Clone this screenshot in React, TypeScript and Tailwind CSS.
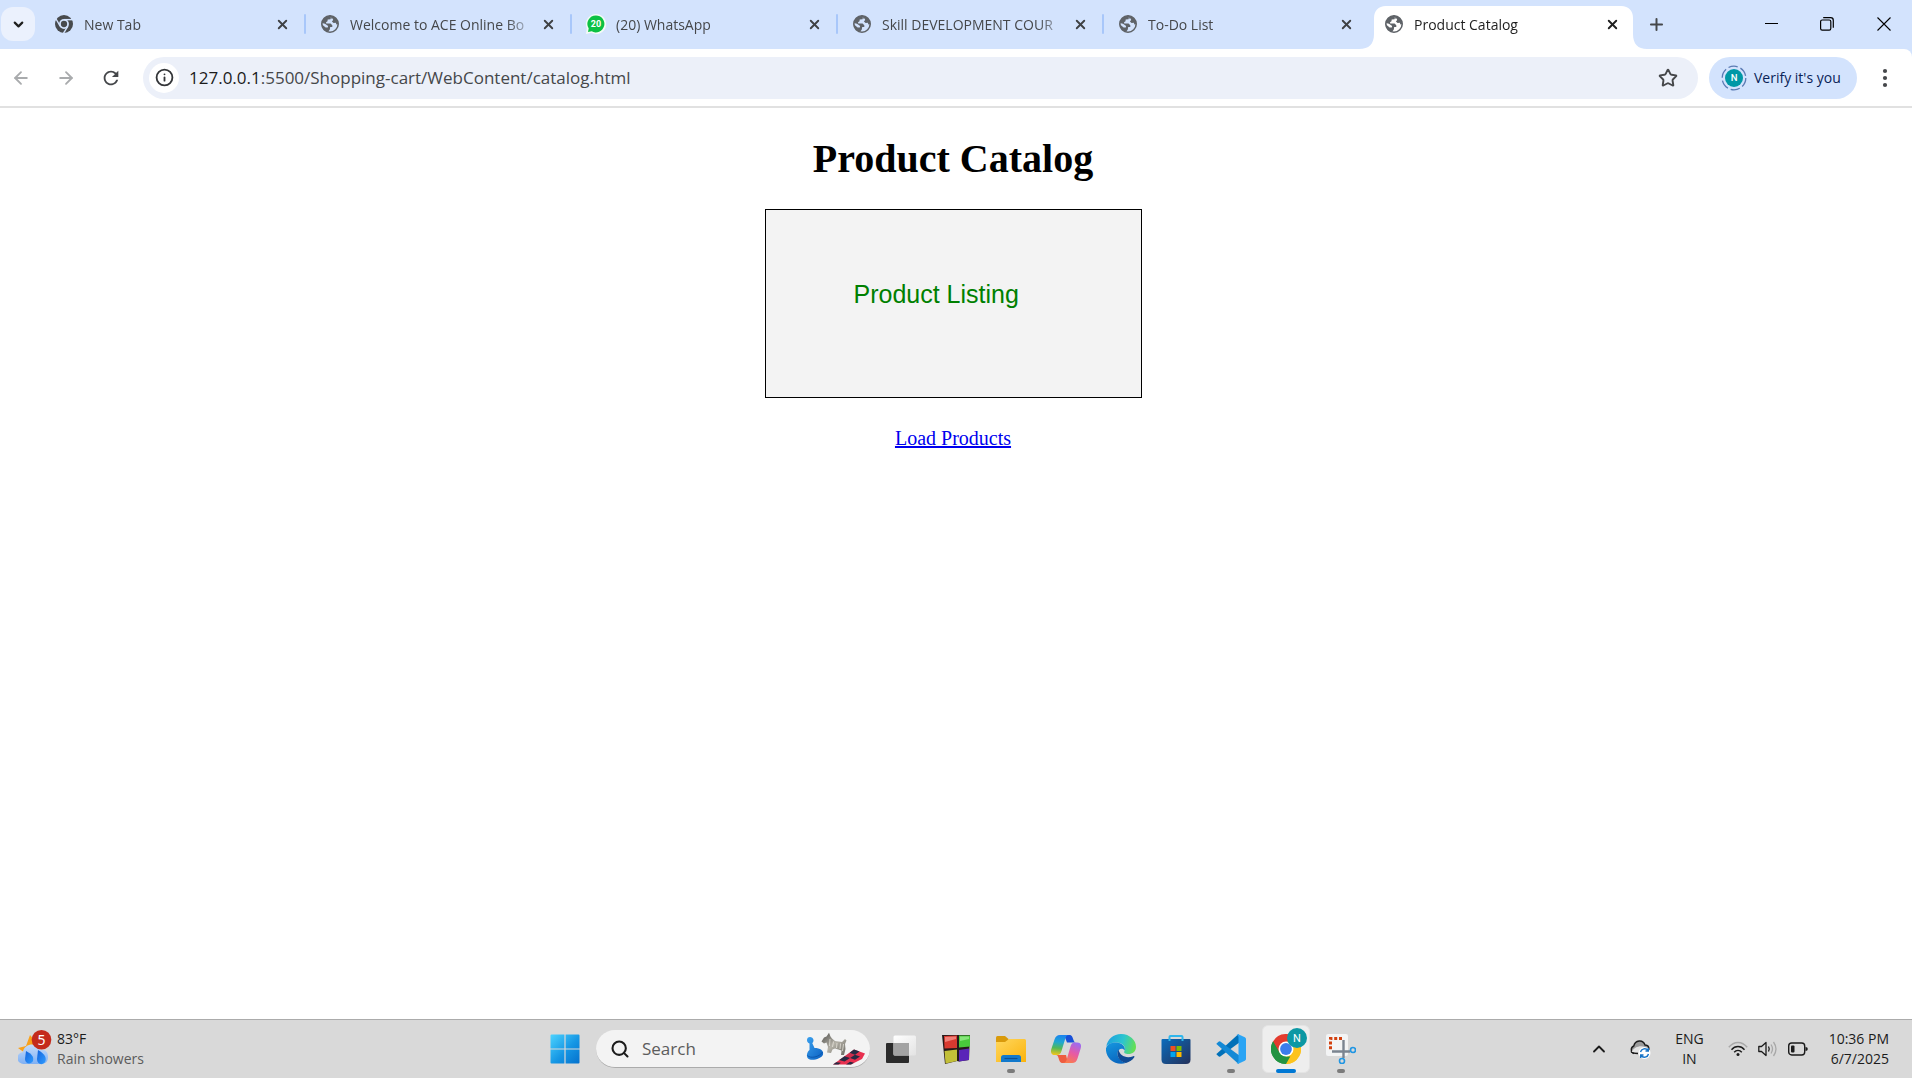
import React from "react";
import { ArrowLeft, ArrowRight, ChevronDown, ChevronUp, Info, Plus, Search, Star, X } from "lucide-react";
import { MdRefresh } from "react-icons/md";

type TabKind = "chrome" | "globe" | "whatsapp";

const tabs: { title: string; icon: TabKind; active?: boolean }[] = [
  { title: "New Tab", icon: "chrome" },
  { title: "Welcome to ACE Online Bo", icon: "globe" },
  { title: "(20) WhatsApp", icon: "whatsapp" },
  { title: "Skill DEVELOPMENT COUR", icon: "globe" },
  { title: "To-Do List", icon: "globe" },
  { title: "Product Catalog", icon: "globe", active: true },
];

function ChromeMono() {
  return (
    <svg viewBox="0 0 24 24" className="size-[18px] shrink-0" aria-hidden="true">
      <circle cx="12" cy="12" r="12" fill="#474a4d" />
      <circle cx="12" cy="12" r="6.6" fill="#d3e3fd" />
      <circle cx="12" cy="12" r="4.2" fill="#474a4d" />
      <g stroke="#d3e3fd" strokeWidth="1.9">
        <path d="M12 6.2H23.5" />
        <path d="M6.9 14.9 1.2 5" />
        <path d="M17.1 14.9 11.3 24.5" />
      </g>
    </svg>
  );
}

function Globe() {
  return (
    <svg viewBox="0 0 18 18" className="size-[18px] shrink-0" aria-hidden="true">
      <circle cx="9" cy="9" r="8.2" fill="none" stroke="#5f6368" strokeWidth="1.6" />
      <path
        d="M11.2 1C9.8 1.8 9.4 2.8 9.6 4.3L6.7 4.6 6.5 6.2 5 7.2 5.3 8.6H9.6L11.3 10.2V12H9.2L8.8 14.6 7 16.9C2.8 16 .7 12.8.8 9.2L4.6 12.6 6.8 12.4 7.1 10.9 4 8.8 1 8C1.5 4 4.5.8 9 .8ZM11 1C15 2 17.2 5 17.1 9L15.4 9.4 14.8 7.8 12.6 7.9 10.9 6.5 12.2 5 11.6 3.6 9.5 3.4Z"
        fill="#5f6368"
      />
    </svg>
  );
}

function WhatsApp() {
  return (
    <svg viewBox="0 0 20 20" className="-mx-px size-5 shrink-0" aria-hidden="true">
      <path d="M10 0a10 10 0 1 1-4.6 18.8L0 20l.8-6A10 10 0 0 1 10 0Z" fill="#f4fbf6" />
      <path d="M10 1.4a8.5 8.5 0 1 1-4.3 15.9L2 18.1l.7-3.7A8.5 8.5 0 0 1 10 1.4Z" fill="#0cc143" />
      <text x="10" y="13.4" textAnchor="middle" fontFamily="Roboto" fontWeight="700" fontSize="9" fill="#fff">20</text>
    </svg>
  );
}

const favicons: Record<TabKind, React.ReactElement> = {
  chrome: <ChromeMono />,
  globe: <Globe />,
  whatsapp: <WhatsApp />,
};

function Tab({ title, icon, active }: { title: string; icon: TabKind; active?: boolean }) {
  return (
    <div className="relative flex h-full w-[266px] min-w-0 shrink items-start pt-[6px]">
      {active && (
        <svg viewBox="0 0 288 43" preserveAspectRatio="none" className="absolute bottom-0 -left-[11px] h-[43px] w-[288px]" aria-hidden="true">
          <path d="M0 43C10 43 15 38 15 28V12C15 5 19 0 27 0H262C270 0 274 5 274 12V28C274 38 279 43 288 43Z" fill="#fff" />
        </svg>
      )}
      <div className="relative flex h-9 w-full items-center pl-[15px]">
        {favicons[icon]}
        <button
          type="button"
          className={
            "ml-[11px] min-w-0 flex-1 overflow-hidden pt-px text-left whitespace-nowrap text-[14px] leading-5 mask-r-from-85% " +
            (active ? "text-[#1f1f1f]" : "text-[#45474a]")
          }
        >
          {title}
        </button>
        <button type="button" aria-label={"Close " + title} className="mr-[15px] ml-1 flex size-[18px] items-center justify-center">
          <X className={"size-[15px] " + (active ? "text-[#1f1f1f]" : "text-[#3f4144]")} strokeWidth={3} />
        </button>
        {!active && title !== "To-Do List" && <span className="absolute right-0 h-5 w-[2px] rounded-full bg-[#a8c7fa]" />}
      </div>
    </div>
  );
}

function TabStrip() {
  return (
    <header className="flex h-[49px] bg-[#d3e3fd]">
      <button type="button" aria-label="Search tabs" className="mt-[7px] mr-[5px] ml-px flex size-[34px] shrink-0 items-center justify-center rounded-xl bg-[#ebf1fd]">
        <ChevronDown className="size-[15px] text-[#1f1f1f]" strokeWidth={3.5} />
      </button>
      <nav className="flex min-w-0" aria-label="Tabs">
        {tabs.map((t) => (
          <Tab key={t.title} {...t} />
        ))}
      </nav>
      <button type="button" aria-label="New tab" className="relative ml-[6px] flex h-12 w-7 items-center justify-center">
        <Plus className="size-[19px] text-[#45474a]" strokeWidth={2.5} />
      </button>
      <div className="ml-auto flex h-[47px] items-center text-black">
        <button type="button" aria-label="Minimize" className="flex h-full w-14 items-center justify-center">
          <span className="h-px w-[13px] bg-black" />
        </button>
        <button type="button" aria-label="Restore" className="flex h-full w-14 items-center justify-center">
          <svg viewBox="0 0 14 14" className="size-[14px]" fill="none" stroke="currentColor" strokeWidth="1.2" aria-hidden="true">
            <rect x=".6" y="3" width="10.2" height="10.2" rx="1.6" />
            <path d="M3.2.7H10.6Q13.3.7 13.3 3.4V10.8" />
          </svg>
        </button>
        <button type="button" aria-label="Close window" className="flex h-full w-[57px] items-center justify-center">
          <svg viewBox="0 0 14 14" className="size-[14px]" stroke="currentColor" strokeWidth="1.1" aria-hidden="true">
            <path d="M.5.5l13 13M13.5.5l-13 13" />
          </svg>
        </button>
      </div>
    </header>
  );
}

function Toolbar() {
  return (
    <div className="bg-[#d3e3fd]">
      <div className="flex h-[59px] items-center rounded-tr-lg border-b-2 border-[#e1e1e1] bg-white">
        <button type="button" aria-label="Back" className="flex h-10 w-[45px] items-center justify-center pr-1">
          <ArrowLeft className="size-5 text-[#a9abad]" strokeWidth={2.2} />
        </button>
        <button type="button" aria-label="Forward" className="flex h-10 w-[45px] items-center justify-center pr-1">
          <ArrowRight className="size-5 text-[#a9abad]" strokeWidth={2.2} />
        </button>
        <button type="button" aria-label="Reload" className="flex h-10 w-[45px] items-center justify-center pr-1">
          <MdRefresh className="size-[22px] text-[#45474a]" />
        </button>
        <div className="ml-2 flex h-[42px] min-w-0 flex-1 items-center rounded-full bg-[#ecf0f9] pl-[6px]">
          <button type="button" aria-label="View site information" className="flex size-[30px] shrink-0 items-center justify-center rounded-full bg-white">
            <Info className="size-[19px] text-[#333538]" strokeWidth={2.3} />
          </button>
          <div className="relative ml-[10px] min-w-0 flex-1 text-[17px] leading-6 whitespace-nowrap text-[#45474a]" role="textbox" aria-label="Address">
            <span className="text-[#1b1b1b]">127.0.0.1</span>:5500/Shopping-cart/WebContent/catalog.html
          </div>
          <button type="button" aria-label="Bookmark this tab" className="mr-5 flex size-5 items-center justify-center">
            <Star className="size-5 text-[#45474a]" strokeWidth={2.3} />
          </button>
        </div>
        <button type="button" className="ml-[11px] flex h-[42px] w-[148px] shrink-0 items-center rounded-full bg-[#d3e3fd] pl-3 text-[14px] whitespace-nowrap text-[#0a2357]">
          <svg viewBox="0 0 26 26" className="mr-[7px] size-[26px]" aria-hidden="true">
            <circle cx="13" cy="13" r="11.8" fill="none" stroke="#5b7bb4" strokeWidth="1.3" strokeDasharray="9.4 3" />
            <circle cx="13" cy="13" r="9" fill="#0098a6" />
            <text x="13" y="16.4" fontFamily="Roboto" fontSize="9.5" fontWeight="500" textAnchor="middle" fill="#fff">N</text>
          </svg>
          Verify it's you
        </button>
        <button type="button" aria-label="Menu" className="flex h-10 w-[55px] shrink-0 items-center justify-center">
          <svg viewBox="0 0 6 20" className="h-5 w-1.5" fill="#45474a" aria-hidden="true">
            <circle cx="3" cy="3" r="2.1" />
            <circle cx="3" cy="10" r="2.1" />
            <circle cx="3" cy="17" r="2.1" />
          </svg>
        </button>
      </div>
    </div>
  );
}

function CatalogPage() {
  return (
    <main className="flex flex-1 flex-col items-center bg-white pt-7 pr-[6px] font-['Liberation_Serif',serif] text-black">
      <h1 className="text-[40px] leading-[46px] font-bold">Product Catalog</h1>
      <div className="mt-[27px] h-[189px] w-[377px] border border-black bg-[#f3f3f3] pt-[68px] pl-[88px] font-['Liberation_Sans',sans-serif] text-[25px] leading-8 text-[#008000]">
        Product Listing
      </div>
      <a href="#products" className="mt-7 text-[20px] leading-[24px] text-[#0000ee] underline decoration-2">
        Load Products
      </a>
    </main>
  );
}

function WeatherIcon() {
  return (
    <svg viewBox="0 0 34 38" className="h-[38px] w-[34px] shrink-0" aria-hidden="true">
      <defs>
        <linearGradient id="cloud" x1="0" y1="0" x2="0" y2="1">
          <stop offset="0" stopColor="#c5dcfb" />
          <stop offset="1" stopColor="#7fb0f3" />
        </linearGradient>
        <linearGradient id="drop" x1="0" y1="0" x2="1" y2="1">
          <stop offset="0" stopColor="#1463dc" />
          <stop offset="1" stopColor="#2f9cff" />
        </linearGradient>
      </defs>
      <path d="M0 18 8 16 12 5 17 11 20 19 7 23Z" fill="#f9a11b" />
      <path d="M6 34a6 6 0 0 1-1-12C6 13 20 12 22 20c6-1 8 3 8 7 0 5-3 7-7 7Z" fill="url(#cloud)" />
      <path d="M8 21c6 3 8 6 7 10-2 4-8 3-8-2Z" fill="url(#drop)" />
      <path d="M20 20c7 4 9 8 7 12-3 4-8 2-8-3Z" fill="url(#drop)" />
      <circle cx="23.500" cy="9.800" r="9.800" fill="#c42b1c" />
      <text x="23.500" y="14.500" textAnchor="middle" fontFamily="Noto Sans" fontSize="14" fill="#fff">5</text>
    </svg>
  );
}

function GameArt() {
  return (
    <svg viewBox="0 0 62 34" className="h-[34px] w-[62px] shrink-0" aria-hidden="true">
      <defs>
        <linearGradient id="pawn" x1="0" y1="0" x2="1" y2="1">
          <stop offset="0" stopColor="#3aa0ee" />
          <stop offset="1" stopColor="#0a5fc0" />
        </linearGradient>
        <linearGradient id="dog" x1="0" y1="0" x2="1" y2="1">
          <stop offset="0" stopColor="#4f4e4b" />
          <stop offset=".5" stopColor="#b5b2a8" />
          <stop offset="1" stopColor="#6a6862" />
        </linearGradient>
      </defs>
      <path d="M3 8.500C2.500 4 9 4 9.500 8 9.500 9.500 9 10.500 8.300 11.200L10.500 16C16 16 20 18.500 19 22.500 17.500 27 7 29.500 4 26.500 2 24 3 20 5.500 18L5.500 11.500C4 10.800 3.200 10 3 8.500Z" fill="url(#pawn)" />
      <path d="M3.500 23.500C6 27 16 25 18.500 20" stroke="#0b56ad" strokeWidth="1" fill="none" />
      <path d="M17.500 9.500 20 5.500 22.500 4.500 25 .8 26.500 4.500 28 6.500 31 9 38 10 41 7 42.500 8.500 41 12 41.500 17 40 23 37 23 37.500 18.500 31 16.500 28.500 17.500 27 21 23 20.500 24 15 22.500 10.500 20 11.500Z" fill="url(#dog)" />
      <path d="M26 7 25.500 14M29.500 9.500 28.500 15M33 11 32.500 16M36.500 11.500 36 17M39.500 12 38.500 19" stroke="#e6e3da" strokeWidth="1" opacity=".8" />
      <path d="M29 32.500 50 17.500 61 21.500 58 27 47 32.500Z" fill="#e8304f" />
      <path d="m50 17.500 5.500 2-4.500 3.200-5.400-2Zm-4.400 3.200-5 3.600 5.400 1.600 5-3.200Zm-5 3.600-5.400 3.800 5 1.200 5.800-3.400Z" fill="#2a2c46" opacity=".12" />
      <path d="m50 17.500 5.500 2-4.500 3.200-5.400-2ZM40.600 24.300l5.400 1.600-5.400 3.600-5.400-1.400ZM51 22.700l5 1.800-5 3.300-5-1.900ZM29 32.500l3.200-2.300 4.800.6-2.500 1.700ZM46 29.800l4 1-3 1.700H42Z" fill="#272b44" />
    </svg>
  );
}

function StartIcon() {
  return (
    <svg viewBox="0 0 30 30" className="size-[30px]" aria-hidden="true">
      <defs>
        <linearGradient id="win" x1="0" y1="0" x2="30" y2="30" gradientUnits="userSpaceOnUse">
          <stop offset="0" stopColor="#4fd5ff" />
          <stop offset=".55" stopColor="#1596e4" />
          <stop offset="1" stopColor="#0470cc" />
        </linearGradient>
      </defs>
      <path d="M1.500 .5H14.400V14.400H.5V1.500Q.5 .5 1.500 .5ZM15.600 .5H28.500Q29.500 .5 29.500 1.500V14.400H15.600ZM.5 15.600H14.400V29.500H1.500Q.5 29.500 .5 28.500ZM15.600 15.600H29.500V28.500Q29.500 29.500 28.500 29.500H15.600Z" fill="url(#win)" />
    </svg>
  );
}

function TaskViewIcon() {
  return (
    <svg viewBox="0 0 30 30" className="size-[30px]" aria-hidden="true">
      <defs>
        <linearGradient id="tv" x1="0" y1="0" x2="1" y2="1">
          <stop offset="0" stopColor="#fff" />
          <stop offset="1" stopColor="#e3e3e3" />
        </linearGradient>
      </defs>
      <rect x="0" y="9" width="23" height="20" rx="1" fill="#2b2b2b" />
      <rect x="7.500" y="1.500" width="22.500" height="20" rx="1.500" fill="url(#tv)" />
      <path d="M7.500 9H23V21.500H8.500Q7.500 21.500 7.500 20.500Z" fill="#a3a3a3" />
    </svg>
  );
}

function BlocksIcon() {
  return (
    <svg viewBox="0 0 30 30" className="size-[30px]" aria-hidden="true">
      <path d="M1 1H29L28.500 13 28 26 18 27.500 16 27 4 30Z" fill="#241a1a" />
      <path d="M3 2 16 1.500V14L3.500 14.500Z" fill="#d93a30" />
      <path d="M18 1.500H29V12.500L18 13.500Z" fill="#49c93b" />
      <path d="M3.500 17 16 15.500V27L4.500 29.500Z" fill="#c2bf38" />
      <path d="M18 16 28 14.500V26L18 27.500Z" fill="#5a25b8" />
      <path d="M4 3 15 2.500V5L4 8Z" fill="#f08078" />
      <path d="M19 2.500H28V5L19 7Z" fill="#86e57a" />
    </svg>
  );
}

function FolderIcon() {
  return (
    <svg viewBox="0 0 30 30" className="size-[30px]" aria-hidden="true">
      <defs>
        <linearGradient id="fold" x1="0" y1="0" x2="1" y2="1">
          <stop offset="0" stopColor="#ffd75e" />
          <stop offset="1" stopColor="#fbb30c" />
        </linearGradient>
      </defs>
      <path d="M0 3.500Q0 2 1.500 2H9L12.500 5V10H0Z" fill="#d99a0b" />
      <path d="M0 8H9L13 5H28.500Q30 5 30 6.500V28H0Z" fill="url(#fold)" />
      <path d="M5 28V23.500Q5 21 7.500 21H22.500Q25 21 25 23.500V28Z" fill="#1279cc" />
      <path d="M8.500 24.500H21.500" stroke="#0b4f94" strokeWidth="1.200" />
    </svg>
  );
}

function CopilotIcon() {
  return (
    <svg viewBox="0 0 30 30" className="size-[30px]" aria-hidden="true">
      <defs>
        <linearGradient id="cpA" x1=".4" y1="0" x2=".3" y2="1">
          <stop offset="0" stopColor="#1b84ef" />
          <stop offset=".35" stopColor="#20a7d0" />
          <stop offset=".65" stopColor="#52b858" />
          <stop offset="1" stopColor="#f2c51c" />
        </linearGradient>
        <linearGradient id="cpB" x1=".7" y1="0" x2=".3" y2="1">
          <stop offset="0" stopColor="#9d6bf0" />
          <stop offset=".5" stopColor="#e75aa5" />
          <stop offset="1" stopColor="#fb7c4b" />
        </linearGradient>
      </defs>
      <path d="M13 1H18C21 1 21.500 3 22.300 5.500 23 7.500 23.500 8.500 25 8.500H16Z" fill="#1850d8" />
      <path d="M17 29H12C9 29 8.500 27 7.700 24.500 7 22 6.500 21 5 21H15Z" fill="#ee5c40" />
      <path d="M9 1H18C15.500 1 14.700 3 14 5.500L10.500 17C9.700 19.500 8.700 21 6 21H4C0 21-.7 18 .5 14.500L3.500 5.500C4.500 2.500 6 1 9 1Z" fill="url(#cpA)" />
      <path d="M21 29H12C14.500 29 15.300 27 16 24.500L19.500 12.500C20.300 10 21.300 8.500 24 8.500H26C30 8.500 30.700 11.500 29.500 15L26.500 24.500C25.500 27.500 24 29 21 29Z" fill="url(#cpB)" />
    </svg>
  );
}

function EdgeIcon() {
  return (
    <svg viewBox="0 0 30 30" className="size-[30px]" aria-hidden="true">
      <defs>
        <linearGradient id="edA" x1="0" y1=".3" x2="1" y2=".5">
          <stop offset="0" stopColor="#1d9fe0" />
          <stop offset=".55" stopColor="#2cc5cf" />
          <stop offset="1" stopColor="#66e052" />
        </linearGradient>
        <linearGradient id="edB" x1="0" y1="0" x2=".4" y2="1">
          <stop offset="0" stopColor="#1698e0" />
          <stop offset="1" stopColor="#0a68c0" />
        </linearGradient>
      </defs>
      <path d="M.3 12.500C1.500 5 7.500 0 15 0 24 0 30 6.500 30 12.700 30 17.500 26.500 20 22.500 20 19 20 17.500 18.800 18.400 17.300 20.500 13.500 17 8.500 10.500 8.500 6 8.500 2 10 .3 12.500Z" fill="url(#edA)" />
      <path d="M.2 14C.8 10.500 5 8.300 10.500 8.500 16 8.700 19.500 12.500 18.700 16.500 17 13.500 11.500 14.500 11.500 19.500 11.500 25 17 28.500 20.500 28.800 9 32.500-1 24-.0 14Z" fill="url(#edB)" />
      <path d="M12.500 15.500C9.500 21 13.500 28 20 29 23.500 28 26.500 26 28.300 23.200 28.700 22.400 28 21.900 27.300 22.200 20 25 13.500 21.500 12.500 15.500Z" fill="#114a93" />
    </svg>
  );
}

function StoreIcon() {
  return (
    <svg viewBox="0 0 30 30" className="size-[30px]" aria-hidden="true">
      <defs>
        <linearGradient id="store" x1="0" y1="0" x2="1" y2="1">
          <stop offset="0" stopColor="#0a6cbd" />
          <stop offset="1" stopColor="#25315a" />
        </linearGradient>
      </defs>
      <path d="M8.500 7V3Q8.500 2 9.500 2H20.500Q21.500 2 21.500 3V7" fill="none" stroke="#2fb6ec" strokeWidth="2" />
      <path d="M.5 6Q.5 5 1.500 5H28.500Q29.500 5 29.500 6V25.500Q29.500 30 25 30H5Q.5 30 .5 25.500Z" fill="url(#store)" />
      <path d="M8.500 5V7M21.500 5V7" stroke="#2fb6ec" strokeWidth="2" />
      <path d="M9.500 12h5v5h-5Z" fill="#f25022" />
      <path d="M15.500 12h5v5h-5Z" fill="#7fba00" />
      <path d="M9.500 18h5v5h-5Z" fill="#00a4ef" />
      <path d="M15.500 18h5v5h-5Z" fill="#ffb900" />
    </svg>
  );
}

function CodeIcon() {
  return (
    <svg viewBox="0 0 30 30" className="size-[30px]" aria-hidden="true">
      <path d="M1 19.500 22.500 0 24 8 4.300 22.500Q3.300 23 2.500 22.300L.6 20.600Q0 20 1 19.500Z" fill="#0070b8" />
      <path d="M1 10.500 22.500 30 24 22 4.300 7.500Q3.300 7 2.500 7.700L.6 9.400Q0 10 1 10.500Z" fill="#1389d6" />
      <path d="M22.300.2 28.800 3.200Q30 3.800 30 5V25Q30 26.200 28.800 26.800L22.300 29.800 20.500 29Q22.500 29 22.500 27V3Q22.500 1 20.500 1Z" fill="#2aa4f4" />
    </svg>
  );
}

function ChromeIcon() {
  return (
    <span className="relative">
      <svg viewBox="0 0 30 30" className="size-[30px]" aria-hidden="true">
        <path d="M15 15 2 7.500A15 15 0 0 1 28 7.500Z" fill="#e33b2e" />
        <path d="M15 15 28 7.500A15 15 0 0 1 15 30Z" fill="#fcc31e" />
        <path d="M15 15 15 30A15 15 0 0 1 2 7.500Z" fill="#229342" />
        <path d="M15 7.500H28A15 15 0 0 1 15 30L21.500 18.700Z" fill="#fcc31e" />
        <path d="M15 7.500H28L26 4 2 7.500 8.500 18.700Z" fill="#e33b2e" />
        <path d="M2 7.500 8.500 18.700 15 22.500H19.300L15 30A15 15 0 0 1 2 7.500Z" fill="#229342" />
        <circle cx="15" cy="15" r="7.500" fill="#fff" />
        <circle cx="15" cy="15" r="5.900" fill="#3b7ded" />
      </svg>
      <span className="absolute -top-[6px] left-4 flex size-5 items-center justify-center rounded-full bg-[#0c98a4] font-[Roboto,sans-serif] text-[11px] leading-none text-white">N</span>
    </span>
  );
}

function SnipIcon() {
  return (
    <svg viewBox="0 0 30 30" className="size-[30px]" aria-hidden="true">
      <rect width="22" height="22" rx="2" fill="#f3f4f5" />
      <path d="M16 4.500H4.500V17" fill="none" stroke="#d2400f" strokeWidth="3" strokeDasharray="3 1.800" />
      <path d="M6 17.500H24M17.500 6V24" stroke="#7b8490" strokeWidth="2.400" />
      <circle cx="27" cy="16" r="2.500" fill="none" stroke="#2196e3" strokeWidth="1.600" />
      <circle cx="16" cy="27" r="2.500" fill="none" stroke="#2196e3" strokeWidth="1.600" />
    </svg>
  );
}

const apps = [
  { name: "Task view", icon: <TaskViewIcon />, state: "" },
  { name: "Blocks", icon: <BlocksIcon />, state: "" },
  { name: "File Explorer", icon: <FolderIcon />, state: "open" },
  { name: "Copilot", icon: <CopilotIcon />, state: "" },
  { name: "Edge", icon: <EdgeIcon />, state: "" },
  { name: "Microsoft Store", icon: <StoreIcon />, state: "" },
  { name: "Visual Studio Code", icon: <CodeIcon />, state: "open" },
  { name: "Chrome", icon: <ChromeIcon />, state: "focused" },
  { name: "Snipping Tool", icon: <SnipIcon />, state: "open" },
];

function Taskbar() {
  return (
    <footer className="grid h-[59px] grid-cols-[1fr_auto_1fr] items-center border-t border-[#ababab] bg-[#d9d9d9] pr-[6px] text-[14px] leading-5">
      <button type="button" className="flex items-center pl-[18px] text-left whitespace-nowrap">
        <WeatherIcon />
        <span className="ml-[5px]">
          <span className="block text-[#1b1b1b]">83°F</span>
          <span className="block text-[#5c5c5c]">Rain showers</span>
        </span>
      </button>
      <div className="flex items-center gap-[7px]">
        <button type="button" aria-label="Start" className="flex size-12 items-center justify-center">
          <StartIcon />
        </button>
        <label className="flex h-[38px] w-[274px] items-center rounded-full border-b border-[#ababab] bg-[#f3f3f3] pr-1 pl-[14px]">
          <Search className="size-5 shrink-0 text-[#1b1b1b]" strokeWidth={2.5} />
          <input type="text" aria-label="Search" placeholder="Search" className="ml-3 min-w-0 flex-1 bg-transparent text-[17px] leading-6 text-[#5c5c5c] outline-none placeholder:text-[#5c5c5c]" />
          <GameArt />
        </label>
        {apps.map((a) => (
          <button
            key={a.name}
            type="button"
            aria-label={a.name}
            className={
              "relative flex size-12 items-center justify-center rounded-md " +
              (a.state === "focused" ? "border border-[#e4e4e4] bg-[#eeeeee]" : "")
            }
          >
            {a.icon}
            {a.state === "open" && <span className="absolute bottom-0 h-1 w-2 rounded-full bg-[#7b7b7b]" />}
            {a.state === "focused" && <span className="absolute -bottom-px h-1 w-5 rounded-full bg-[#0078d4]" />}
          </button>
        ))}
      </div>
      <div className="flex items-center justify-end pr-[17px] whitespace-nowrap text-[#1b1b1b]">
        <button type="button" aria-label="Show hidden icons" className="mr-5">
          <ChevronUp className="size-5" strokeWidth={2.2} />
        </button>
        <svg viewBox="0 0 22 20" className="mr-6 h-5 w-[22px]" aria-hidden="true">
          <path d="M5 14.500A4 4 0 0 1 4.800 7C6 1 14 0 16 6c4 0 5 4 3 7" fill="#9b9b9b" stroke="#1b1b1b" strokeWidth="1.400" />
          <path d="M2.500 13C5 8 11 6 16 8l-5 6Z" fill="#e3e3e3" />
          <path d="M2 12.500Q3 14.500 9 14.500" stroke="#1b1b1b" strokeWidth="1.400" fill="none" />
          <circle cx="15.500" cy="14" r="6" fill="#fff" />
          <path d="M11.500 13A4.200 4.200 0 0 1 19 11.500M19.500 15A4.200 4.200 0 0 1 12 16.500M19.300 9V12H16.500M11.700 19V16H14.500" stroke="#1673c8" strokeWidth="1.400" fill="none" />
        </svg>
        <button type="button" aria-label="Keyboard language" className="mr-6 text-center leading-5">
          <span className="block">ENG</span>
          <span className="block">IN</span>
        </button>
        <button type="button" aria-label="Network, sound and battery" className="mr-[21px] flex items-center gap-[10px]">
          <svg viewBox="0 0 20 16" className="h-4 w-5" fill="none" stroke="#1b1b1b" strokeWidth="1.400" aria-hidden="true">
            <path d="M.8 6.300C6-.2 14-.2 19.200 6.300" stroke="#a8a8a8" />
            <path d="M3.500 8.700C7 4.400 13 4.400 16.500 8.700M6.200 11.200C8.300 8.700 11.700 8.700 13.800 11.200" />
            <circle cx="10" cy="13.500" r="1.500" fill="#1b1b1b" stroke="none" />
          </svg>
          <svg viewBox="0 0 20 18" className="h-[18px] w-5" fill="none" stroke="#1b1b1b" strokeWidth="1.300" aria-hidden="true">
            <path d="M.8 6.500H3.500L8 2.500V15.500L3.500 11.500H.8Z" strokeLinejoin="round" />
            <path d="M10.500 6.500Q12 9 10.500 11.500" />
            <path d="M13 4.500Q16 9 13 13.500M15.500 2Q20.500 9 15.500 16" stroke="#a8a8a8" />
          </svg>
          <svg viewBox="0 0 20 14" className="h-[14px] w-5" aria-hidden="true">
            <rect x=".7" y="1" width="16" height="12" rx="3" fill="none" stroke="#1b1b1b" strokeWidth="1.400" />
            <rect x="3" y="3.500" width="3.500" height="7" rx="1" fill="#1b1b1b" />
            <path d="M17.500 5Q19.800 5 19.800 7T17.500 9Z" fill="#1b1b1b" />
          </svg>
        </button>
        <button type="button" aria-label="Clock" className="text-right leading-5">
          <span className="block">10:36 PM</span>
          <span className="block">6/7/2025</span>
        </button>
      </div>
    </footer>
  );
}

export default function App() {
  return (
    <div className="flex min-h-screen flex-col bg-white font-['Open_Sans','Noto_Sans',sans-serif]">
      <TabStrip />
      <Toolbar />
      <CatalogPage />
      <Taskbar />
    </div>
  );
}
